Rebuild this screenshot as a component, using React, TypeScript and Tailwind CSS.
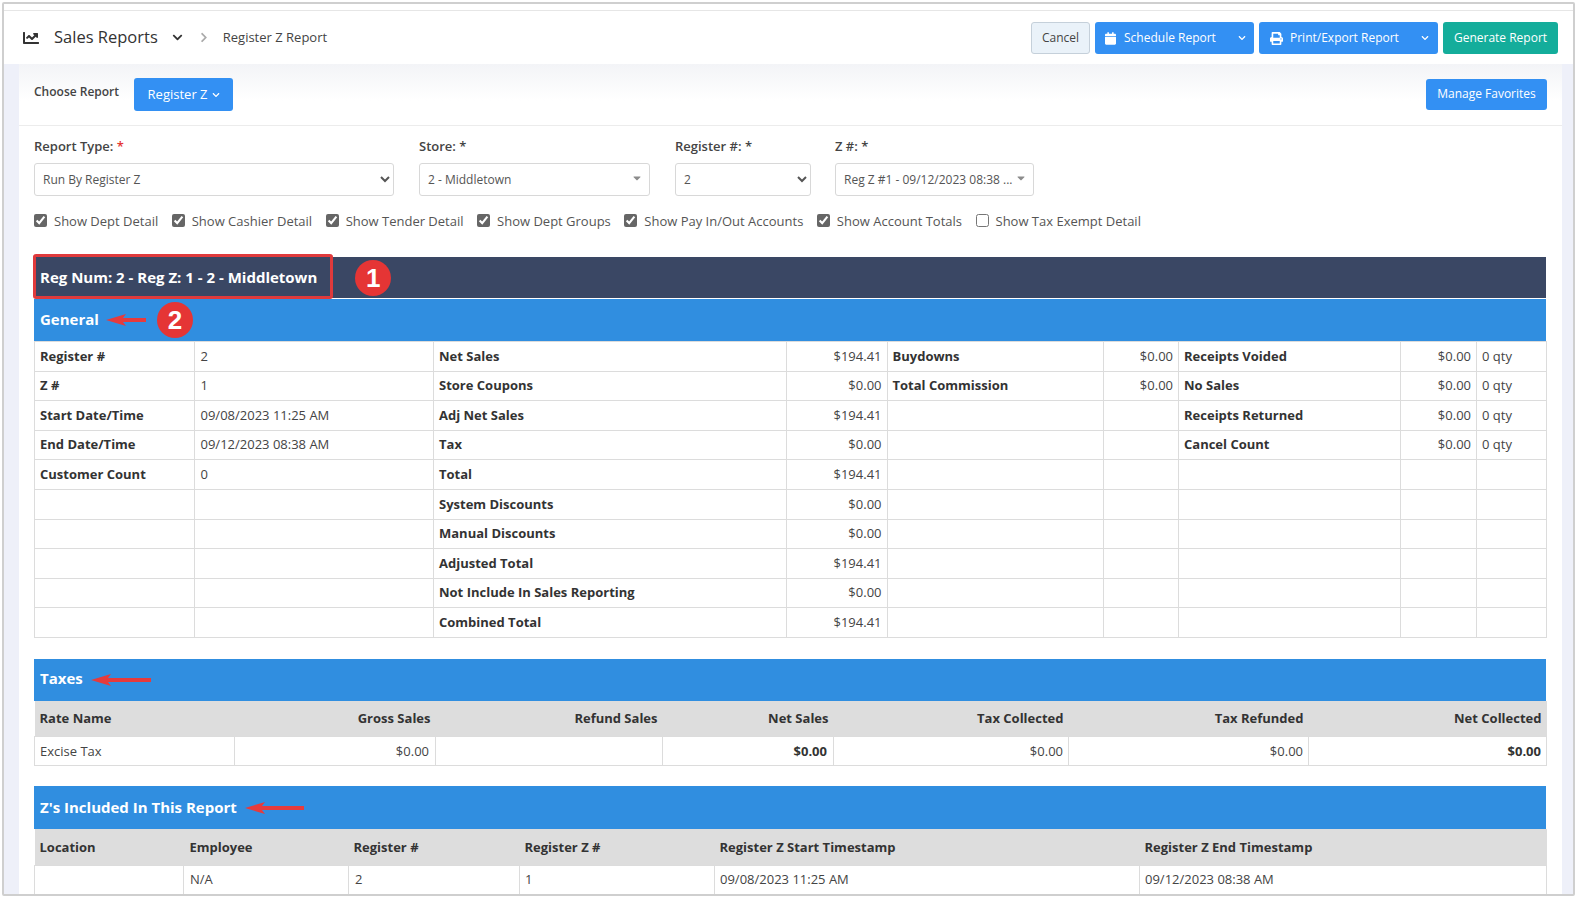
import React from "react";
import { FaChartLine, FaCalendar, FaPrint, FaChevronDown, FaChevronRight, FaCaretDown } from "react-icons/fa";

const general: [string, string, string, string, string, string, string, string, string][] = [
  ["Register #", "2", "Net Sales", "$194.41", "Buydowns", "$0.00", "Receipts Voided", "$0.00", "0 qty"],
  ["Z #", "1", "Store Coupons", "$0.00", "Total Commission", "$0.00", "No Sales", "$0.00", "0 qty"],
  ["Start Date/Time", "09/08/2023 11:25 AM", "Adj Net Sales", "$194.41", "", "", "Receipts Returned", "$0.00", "0 qty"],
  ["End Date/Time", "09/12/2023 08:38 AM", "Tax", "$0.00", "", "", "Cancel Count", "$0.00", "0 qty"],
  ["Customer Count", "0", "Total", "$194.41", "", "", "", "", ""],
  ["", "", "System Discounts", "$0.00", "", "", "", "", ""],
  ["", "", "Manual Discounts", "$0.00", "", "", "", "", ""],
  ["", "", "Adjusted Total", "$194.41", "", "", "", "", ""],
  ["", "", "Not Include In Sales Reporting", "$0.00", "", "", "", "", ""],
  ["", "", "Combined Total", "$194.41", "", "", "", "", ""],
];

const checks: [string, boolean][] = [
  ["Show Dept Detail", true],
  ["Show Cashier Detail", true],
  ["Show Tender Detail", true],
  ["Show Dept Groups", true],
  ["Show Pay In/Out Accounts", true],
  ["Show Account Totals", true],
  ["Show Tax Exempt Detail", false],
];

function Arrow({ width, className }: { width: number; className: string }) {
  return (
    <svg width={width} height="14" viewBox={`0 0 ${width} 14`} className={className}>
      <path d={`M0 7 L20 1 L17 5 L${width} 5 L${width} 9 L17 9 L20 13 Z`} fill="#e63b3d" />
    </svg>
  );
}

function Circle({ n, className }: { n: string; className: string }) {
  return (
    <span className={`flex h-[36px] w-[36px] items-center justify-center rounded-full bg-[#e53535] font-['Liberation_Sans',sans-serif] text-[26px] leading-none text-white ${className}`}>
      {n}
    </span>
  );
}

function Bar({ title, children, h, lift }: { title: string; children?: React.ReactNode; h: string; lift: string }) {
  return (
    <div className={`flex items-center bg-[#308ee0] pl-[6px] text-[15px] font-bold text-white ${h}`}>
      <span className={lift}>{title}</span>
      {children}
    </div>
  );
}

function Btn({ children, className = "" }: { children: React.ReactNode; className?: string }) {
  return (
    <button className={`flex h-[32px] items-center rounded-[3px] bg-[#3390f3] pt-[1px] text-[12px] text-white ${className}`}>
      {children}
    </button>
  );
}

export default function App() {
  return (
    <div className="h-[898px] w-[1576px] overflow-hidden bg-white pb-[2px] pl-[2px] pr-[1px] pt-[2px] font-['Open_Sans',sans-serif] text-[13px] text-[#444]">
      <div className="flex h-full flex-col overflow-hidden rounded-[2px] border-2 border-[#cfcfcf]">
        <div className="h-[7px] shrink-0 border-b border-[#e6e6e6] bg-white" />
        <header className="flex h-[53px] shrink-0 items-center bg-white pl-[19px] pr-[15px]">
          <FaChartLine className="h-[16px] w-[16px] text-[#333]" />
          <span className="ml-[15px] text-[16.5px] text-[#333]">Sales Reports</span>
          <FaChevronDown className="ml-[14px] h-[11px] w-[11px] text-[#333]" />
          <FaChevronRight className="ml-[17px] h-[11px] w-[8px] text-[#aaa]" />
          <span className="ml-[15px] text-[13px] text-[#444]">Register Z Report</span>
          <div className="ml-auto flex gap-[5px]">
            <button className="h-[32px] w-[59px] rounded-[3px] border border-[#c5d0da] bg-[#eaf2f9] pt-[1px] text-[12px] text-[#444]">Cancel</button>
            <Btn className="w-[159px] pl-[10px]">
              <FaCalendar className="h-[13px] w-[11px]" />
              <span className="ml-[8px]">Schedule Report</span>
              <FaChevronDown className="ml-auto mr-[8px] h-[8px] w-[8px]" />
            </Btn>
            <Btn className="w-[179px] pl-[11px]">
              <FaPrint className="h-[13px] w-[13px]" />
              <span className="ml-[7px]">Print/Export Report</span>
              <FaChevronDown className="ml-auto mr-[9px] h-[8px] w-[8px]" />
            </Btn>
            <Btn className="w-[115px] justify-center !bg-[#14ad9b]">Generate Report</Btn>
          </div>
        </header>
        <div className="flex min-h-0 flex-1">
          <div className="w-[15px] shrink-0 bg-[#eef0f9]" />
          <main className="min-w-0 flex-1 overflow-hidden bg-white">
            <div className="flex h-[62px] items-center justify-between border-b border-[#ececec] bg-gradient-to-b from-[#f3f4f7] to-white to-60% pl-[15px] pr-[15px]">
              <div className="flex items-center">
                <span className="-mt-[6px] text-[12px] font-semibold text-[#444]">Choose Report</span>
                <button className="ml-[15px] flex h-[33px] w-[99px] items-center justify-center gap-[4px] rounded-[3px] bg-[#3390f3] text-[13px] text-white">
                  Register Z
                  <FaChevronDown className="h-[8px] w-[8px]" />
                </button>
              </div>
              <button className="-mt-[1px] h-[31px] w-[121px] rounded-[3px] bg-[#3390f3] text-[12px] text-white">Manage Favorites</button>
            </div>

            <div className="pl-[15px] pr-[16px]">
              <div className="mt-[11px] flex">
                <div className="w-[360px]">
                  <div className="h-[18px] text-[13px] font-semibold leading-[18px] text-[#444]">
                    Report Type: <span className="text-[#e53535]">*</span>
                  </div>
                  <select className="mt-[8px] h-[33px] w-full rounded-[3px] border border-[#d8d8d8] bg-white pl-[4px] text-[12px] text-[#555]">
                    <option>Run By Register Z</option>
                  </select>
                </div>
                <div className="ml-[25px] w-[231px]">
                  <div className="h-[18px] text-[13px] font-semibold leading-[18px] text-[#444]">Store: *</div>
                  <div className="mt-[8px] flex h-[33px] items-center rounded-[3px] border border-[#d8d8d8] bg-white pl-[8px] pr-[6px] text-[12px] text-[#555]">
                    2 - Middletown
                    <FaCaretDown className="-mt-[4px] ml-auto h-[12px] w-[12px] text-[#8c8c8c]" />
                  </div>
                </div>
                <div className="ml-[25px] w-[136px]">
                  <div className="h-[18px] text-[13px] font-semibold leading-[18px] text-[#444]">Register #: *</div>
                  <select className="mt-[8px] h-[33px] w-full rounded-[3px] border border-[#d8d8d8] bg-white pl-[4px] text-[12px] text-[#555]">
                    <option>2</option>
                  </select>
                </div>
                <div className="ml-[24px] w-[199px]">
                  <div className="h-[18px] text-[13px] font-semibold leading-[18px] text-[#444]">Z #: *</div>
                  <div className="mt-[8px] flex h-[33px] items-center rounded-[3px] border border-[#d8d8d8] bg-white pl-[8px] pr-[6px] text-[12px] text-[#555]">
                    <span className="whitespace-nowrap">Reg Z #1 - 09/12/2023 08:38 ...</span>
                    <FaCaretDown className="-mt-[4px] ml-auto h-[12px] w-[12px] text-[#8c8c8c]" />
                  </div>
                </div>
              </div>

              <div className="mt-[17px] flex h-[18px] items-center gap-[13.5px]">
                {checks.map(([label, on]) => (
                  <label key={label} className="flex items-center gap-[7px] whitespace-nowrap text-[13px] text-[#555]">
                    <input type="checkbox" defaultChecked={on} className="m-0 h-[13px] w-[13px] -translate-y-[2px] accent-[#666]" />
                    {label}
                  </label>
                ))}
              </div>

              <div className="relative mt-[26px] flex h-[42px] items-center border-b border-white bg-[#3a4764] pl-[6px] text-[15px] font-bold text-white">
                <span>Reg Num: 2 - Reg Z: 1 - 2 - Middletown</span>
                <div className="absolute -left-[1px] -top-[3px] h-[45px] w-[300px] rounded-[3px] border-[3px] border-[#e03a3c]" />
                <Circle n="1" className="ml-[38px]" />
              </div>

              <Bar title="General" h="h-[42px]" lift="mb-[1px]">
                <Arrow width={40} className="ml-[7px]" />
                <Circle n="2" className="ml-[11px]" />
              </Bar>
              <table className="w-[1512px] table-fixed border-collapse">
                <colgroup>
                  <col className="w-[159.5px]" />
                  <col className="w-[239.5px]" />
                  <col className="w-[353px]" />
                  <col className="w-[100.5px]" />
                  <col className="w-[216px]" />
                  <col className="w-[75.5px]" />
                  <col className="w-[222px]" />
                  <col className="w-[76px]" />
                  <col className="w-[70px]" />
                </colgroup>
                <tbody>
                  {general.map((r, i) => (
                    <tr key={i} className="h-[29.6px]">
                      <td className="border border-[#dcdcdc] px-[5px] font-bold text-[#333]">{r[0]}</td>
                      <td className="border border-[#dcdcdc] px-[6px]">{r[1]}</td>
                      <td className="border border-[#dcdcdc] px-[5px] font-bold text-[#333]">{r[2]}</td>
                      <td className="border border-[#dcdcdc] px-[5px] text-right">{r[3]}</td>
                      <td className="border border-[#dcdcdc] px-[5px] font-bold text-[#333]">{r[4]}</td>
                      <td className="border border-[#dcdcdc] px-[5px] text-right">{r[5]}</td>
                      <td className="border border-[#dcdcdc] px-[5px] font-bold text-[#333]">{r[6]}</td>
                      <td className="border border-[#dcdcdc] px-[5px] text-right">{r[7]}</td>
                      <td className="border border-[#dcdcdc] px-[5px]">{r[8]}</td>
                    </tr>
                  ))}
                </tbody>
              </table>

              <div className="mt-[21px]">
                <Bar title="Taxes" h="h-[42px]" lift="mb-[3px]">
                  <Arrow width={60} className="ml-[8px]" />
                </Bar>
              </div>
              <table className="w-[1512px] table-fixed border-collapse">
                <colgroup>
                  <col className="w-[200px]" />
                  <col className="w-[201px]" />
                  <col className="w-[227px]" />
                  <col className="w-[171px]" />
                  <col className="w-[235px]" />
                  <col className="w-[240px]" />
                  <col className="w-[238px]" />
                </colgroup>
                <thead>
                  <tr className="h-[36px] bg-[#dddddd] font-bold text-[#333]">
                    <th className="px-[5px] text-left">Rate Name</th>
                    <th className="px-[5px] text-right">Gross Sales</th>
                    <th className="px-[5px] text-right">Refund Sales</th>
                    <th className="px-[5px] text-right">Net Sales</th>
                    <th className="px-[5px] text-right">Tax Collected</th>
                    <th className="px-[5px] text-right">Tax Refunded</th>
                    <th className="px-[5px] text-right">Net Collected</th>
                  </tr>
                </thead>
                <tbody>
                  <tr className="h-[29px]">
                    <td className="border border-[#dcdcdc] px-[5px]">Excise Tax</td>
                    <td className="border border-[#dcdcdc] px-[6px] text-right">$0.00</td>
                    <td className="border border-[#dcdcdc] px-[5px] text-right"></td>
                    <td className="border border-[#dcdcdc] px-[6px] text-right font-bold text-[#333]">$0.00</td>
                    <td className="border border-[#dcdcdc] px-[5px] text-right">$0.00</td>
                    <td className="border border-[#dcdcdc] px-[5px] text-right">$0.00</td>
                    <td className="border border-[#dcdcdc] px-[5px] text-right font-bold text-[#333]">$0.00</td>
                  </tr>
                </tbody>
              </table>

              <div className="mt-[20px]">
                <Bar title="Z's Included In This Report" h="h-[43px]" lift="mb-[2px]">
                  <Arrow width={59} className="ml-[8px]" />
                </Bar>
              </div>
              <table className="w-[1512px] table-fixed border-collapse">
                <colgroup>
                  <col className="w-[149px]" />
                  <col className="w-[165px]" />
                  <col className="w-[171px]" />
                  <col className="w-[195px]" />
                  <col className="w-[425px]" />
                  <col className="w-[407px]" />
                </colgroup>
                <thead>
                  <tr className="h-[36px] bg-[#dddddd] font-bold text-[#333]">
                    <th className="px-[5px] pt-[1px] text-left">Location</th>
                    <th className="px-[6px] pt-[1px] text-left">Employee</th>
                    <th className="px-[5px] pt-[1px] text-left">Register #</th>
                    <th className="px-[5px] pt-[1px] text-left">Register Z #</th>
                    <th className="px-[5px] pt-[1px] text-left">Register Z Start Timestamp</th>
                    <th className="px-[5px] pt-[1px] text-left">Register Z End Timestamp</th>
                  </tr>
                </thead>
                <tbody>
                  <tr className="h-[30px]">
                    <td className="border border-[#dcdcdc] px-[5px] pb-[2px]"></td>
                    <td className="border border-[#dcdcdc] px-[6px] pb-[2px]">N/A</td>
                    <td className="border border-[#dcdcdc] px-[6px] pb-[2px]">2</td>
                    <td className="border border-[#dcdcdc] px-[5px] pb-[2px]">1</td>
                    <td className="border border-[#dcdcdc] px-[5px] pb-[2px]">09/08/2023 11:25 AM</td>
                    <td className="border border-[#dcdcdc] px-[5px] pb-[2px]">09/12/2023 08:38 AM</td>
                  </tr>
                </tbody>
              </table>
            </div>
          </main>
          <div className="w-[11px] shrink-0 bg-[#eef0f9]" />
        </div>
      </div>
    </div>
  );
}
